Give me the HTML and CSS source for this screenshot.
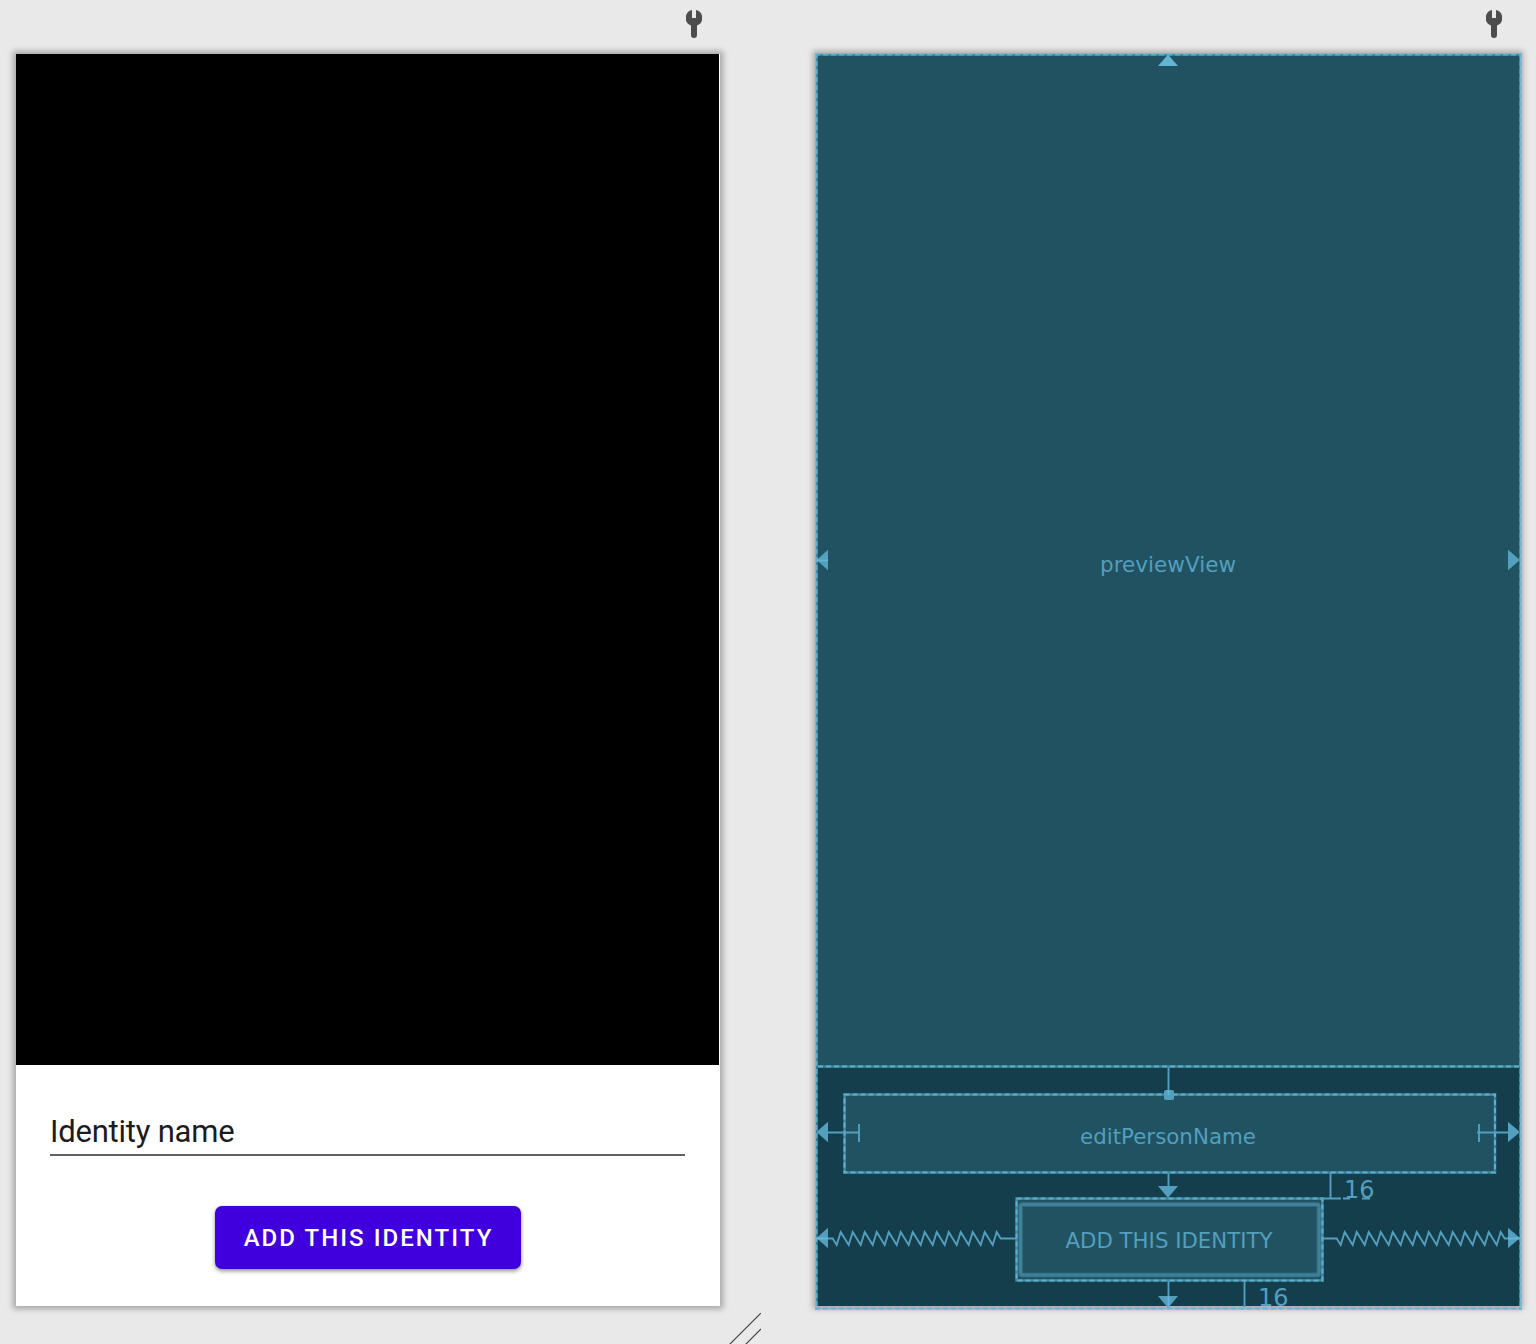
FILE: index.html
```html
<!DOCTYPE html>
<html lang="en">
<head>
<meta charset="utf-8">
<title>Layout editor</title>
<link rel="stylesheet" href="styles.css">
</head>
<body>
<main class="editor">
  <section class="pane">
    <header class="pane-bar">
      <svg class="wrench" width="16" height="28" viewBox="0 0 16 28"><path d="M6 .1V8h4V.1A8 8 0 0 1 11 15.4V25a3 3 0 0 1-6 0V15.4A8 8 0 0 1 6 .1Z"/></svg>
    </header>
    <div class="surface design">
      <div class="camera"></div>
      <div class="form">
        <div class="field">Identity name</div>
        <div class="button">ADD THIS IDENTITY</div>
      </div>
    </div>
  </section>
  <div class="gutter">
    <svg class="resize" width="32" height="31" viewBox="0 0 32 31"><path d="M.5 31.5 32 0M16.5 31.5 32 16"/></svg>
  </div>
  <section class="pane">
    <header class="pane-bar">
      <svg class="wrench" width="16" height="28" viewBox="0 0 16 28"><path d="M6 .1V8h4V.1A8 8 0 0 1 11 15.4V25a3 3 0 0 1-6 0V15.4A8 8 0 0 1 6 .1Z"/></svg>
    </header>
    <div class="surface blueprint">
      <svg class="canvas" width="704" height="1252" viewBox="816 54 704 1252">
        <!-- component fills -->
        <g class="component">
          <rect x="816" y="54" width="704" height="1012"/>
          <rect x="844" y="1094" width="651" height="78"/>
          <rect x="1016" y="1198" width="307" height="83"/>
        </g>
        <rect class="button-halo" x="1020.5" y="1204.5" width="298.5" height="70.5" rx="2"/>
        <rect class="button-edge" x="1020.5" y="1204.5" width="298.5" height="70.5" rx="2"/>
        <!-- component outlines -->
        <g class="outline">
          <path d="M815 54.5H1522M816.5 53V1310M1520.5 53V1310M815 1308.5H1522M818 1066.5H1520"/>
          <rect x="844.5" y="1094.5" width="650.5" height="78"/>
          <rect x="1016.5" y="1198.5" width="306" height="82"/>
        </g>
        <g class="dashes">
          <path d="M815 54.5H1522M816.5 53V1310M1520.5 53V1310M815 1308.5H1522M818 1066.5H1520"/>
          <rect x="844.5" y="1094.5" width="650.5" height="78"/>
          <rect x="1016.5" y="1198.5" width="306" height="82"/>
        </g>
        <!-- constraint lines -->
        <g class="wire">
          <path d="M1168.5 1067V1094M1168.5 1173V1187M1168.5 1281V1308"/>
          <path d="M828 1132.5H859M859 1124V1142M1477 1132.5H1509M1479 1124V1142"/>
          <path d="M1330.5 1173V1198M1244.5 1281V1307M1320 1198.5H1341M1343 1198.5H1350M1362 1198.5H1370"/>
          <path d="M828 1238.5H832.7l4 6.5 4-13 8 13 4-13 8 13 4-13 8 13 4-13 8 13 4-13 8 13 4-13 8 13 4-13 8 13 4-13 8 13 4-13 8 13 4-13 8 13 4-13 8 13 4-13 8 13 4-13 8 13 4-13 4 6.5H1016"/>
          <path d="M1323 1238.5H1336.7l4 6.5 4-13 8 13 4-13 8 13 4-13 8 13 4-13 8 13 4-13 8 13 4-13 8 13 4-13 8 13 4-13 8 13 4-13 8 13 4-13 8 13 4-13 8 13 4-13 8 13 4-13 8 13 4-13 4 6.5H1508"/>
        </g>
        <g class="arrow">
          <path class="arrow-strong" d="M1168 54.5 1178 66H1158Z"/>
          <path d="M816.5 560 828 549.7V570.3ZM1520 560 1508 549.7V570.3Z"/>
          <path d="M816.5 1132 828 1121.7V1142.3ZM1520 1132 1508 1121.7V1142.3Z"/>
          <path d="M816.5 1238 828 1227.7V1248.3ZM1520 1238 1508 1227.7V1248.3Z"/>
          <path d="M1158 1186H1178L1168 1198ZM1158 1296H1178L1168 1308Z"/>
          <rect x="1164" y="1090" width="10" height="10" rx="2"/>
        </g>
        <g class="overlap">
          <path d="M816 560.5H828M816 1238.5H828M1508 1238.5H1520M1168.5 1296V1308M1168.5 1090V1095"/>
        </g>
        <g class="label">
          <text x="1168" y="572" textLength="136" lengthAdjust="spacingAndGlyphs">previewView</text>
          <text x="1168" y="1144" textLength="176" lengthAdjust="spacingAndGlyphs">editPersonName</text>
          <text x="1169" y="1248" textLength="207" lengthAdjust="spacingAndGlyphs">ADD THIS IDENTITY</text>
        </g>
        <g class="margin">
          <text x="1344" y="1198">16</text>
          <text x="1258" y="1306">16</text>
        </g>
      </svg>
    </div>
  </section>
</main>
</body>
</html>
```
FILE: styles.css
```css
body {
  margin: 0;
  background: #e9e9e9;
}
.editor {
  display: flex;
  box-sizing: border-box;
  width: 1536px;
  height: 1344px;
  padding-left: 16px;
  overflow: hidden;
}
.pane {
  width: 704px;
}
.pane-bar {
  display: flex;
  justify-content: flex-end;
  box-sizing: border-box;
  height: 54px;
  padding: 10px 18px 0 0;
}
.wrench {
  fill: #4d4d4d;
}
.gutter {
  display: flex;
  align-items: flex-end;
  width: 96px;
}
.resize {
  margin-left: 9px;
  fill: none;
  stroke: #3c3c3c;
  stroke-width: 1.1;
}
.surface {
  height: 1252px;
  box-shadow: 0 0 6px 3px rgba(0, 0, 0, 0.29);
}
.design {
  background: #fff;
}
.camera {
  width: 703px;
  height: 1011px;
  background: #000;
}
.form {
  display: flex;
  flex-direction: column;
  align-items: center;
  box-sizing: border-box;
  padding: 42px 35px 0 34px;
}
.field {
  align-self: stretch;
  box-sizing: border-box;
  height: 49px;
  border-bottom: 2px solid #616161;
  color: #1c1c1c;
  font: 31px/49px Roboto, sans-serif;
  letter-spacing: -0.22px;
}
.button {
  box-sizing: border-box;
  width: 306px;
  height: 63px;
  margin-top: 50px;
  padding-left: 2px;
  border-radius: 7px;
  background: #4000dd;
  box-shadow: 0 2px 4px rgba(0, 0, 0, 0.45);
  color: #fff;
  font: 500 24px/65px Roboto, sans-serif;
  letter-spacing: 2.05px;
  text-align: center;
  white-space: nowrap;
}
.blueprint {
  background: #153e4d;
}
.canvas {
  display: block;
  overflow: visible;
}
.component {
  fill: #215262;
}
.button-halo,
.button-edge {
  fill: none;
  stroke: #3f7f98;
  stroke-width: 3;
}
.button-halo {
  stroke-opacity: 0.5;
  stroke-width: 5;
}
.outline {
  fill: none;
  stroke: #5fb6d5;
  stroke-opacity: 0.55;
  stroke-width: 2.6;
}
.dashes {
  fill: none;
  stroke: #64b7d6;
  stroke-dasharray: 5 3;
  stroke-opacity: 0.85;
  stroke-width: 2;
}
.wire {
  fill: none;
  stroke: #539fbd;
  stroke-width: 1.9;
}
.arrow {
  fill: #539fbd;
}
.arrow-strong {
  fill: #62b5d4;
}
.overlap {
  stroke: #62b5d4;
  stroke-width: 1.8;
}
.label,
.margin {
  fill: #539fbd;
  font-family: "DejaVu Sans", sans-serif;
}
.label {
  font-size: 22px;
  text-anchor: middle;
}
.margin {
  font-size: 24px;
}
```
